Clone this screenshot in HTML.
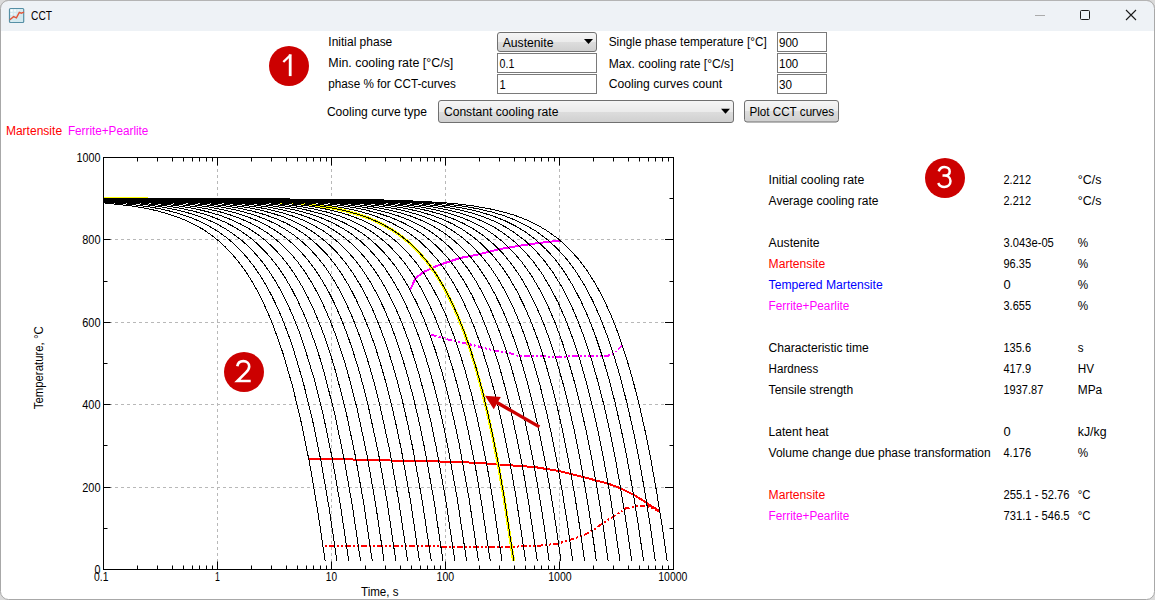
<!DOCTYPE html>
<html><head><meta charset="utf-8"><style>
html,body{margin:0;padding:0;width:1155px;height:600px;overflow:hidden;background:#dadada}
text{font-family:"Liberation Sans",sans-serif}
</style></head><body>
<svg width="1155" height="600" viewBox="0 0 1155 600" style="position:absolute;left:0;top:0">
<defs><linearGradient id="btn" x1="0" y1="0" x2="0" y2="1"><stop offset="0" stop-color="#f6f6f6"/><stop offset="0.5" stop-color="#ebebeb"/><stop offset="0.5" stop-color="#dddddd"/><stop offset="1" stop-color="#cfcfcf"/></linearGradient></defs>
<rect x="0" y="0" width="1155" height="600" fill="#dadada"/>
<rect x="0.5" y="0.5" width="1154" height="599" rx="8" ry="8" fill="#ffffff" stroke="#a8a8a8" stroke-width="1"/>
<path d="M1 31 V8.5 A7.5 7.5 0 0 1 8.5 1 H1146.5 A7.5 7.5 0 0 1 1154 8.5 V31 Z" fill="#eef2f6"/>
<path d="M0.5 8.5 A8 8 0 0 1 8.5 0.5 H1146.5 A8 8 0 0 1 1154.5 8.5" fill="none" stroke="#b4b4b4"/>
<g>
<rect x="9.5" y="8.5" width="14.2" height="14" rx="1" fill="#d3e9ef" stroke="#558fa5" stroke-width="1.2"/>
<rect x="10.4" y="9.4" width="2.3" height="2.3" fill="#ffffff" opacity="1.00"/>
<rect x="10.4" y="12.9" width="2.3" height="2.3" fill="#ffffff" opacity="0.72"/>
<rect x="10.4" y="16.4" width="2.3" height="2.3" fill="#ffffff" opacity="0.44"/>
<rect x="10.4" y="19.9" width="2.3" height="2.3" fill="#ffffff" opacity="0.16"/>
<rect x="13.9" y="9.4" width="2.3" height="2.3" fill="#ffffff" opacity="0.72"/>
<rect x="13.9" y="12.9" width="2.3" height="2.3" fill="#ffffff" opacity="0.44"/>
<rect x="13.9" y="16.4" width="2.3" height="2.3" fill="#ffffff" opacity="0.16"/>
<rect x="13.9" y="19.9" width="2.3" height="2.3" fill="#ffffff" opacity="0.00"/>
<rect x="17.4" y="9.4" width="2.3" height="2.3" fill="#ffffff" opacity="0.44"/>
<rect x="17.4" y="12.9" width="2.3" height="2.3" fill="#ffffff" opacity="0.16"/>
<rect x="17.4" y="16.4" width="2.3" height="2.3" fill="#ffffff" opacity="0.00"/>
<rect x="17.4" y="19.9" width="2.3" height="2.3" fill="#ffffff" opacity="0.00"/>
<rect x="20.9" y="9.4" width="2.3" height="2.3" fill="#ffffff" opacity="0.16"/>
<rect x="20.9" y="12.9" width="2.3" height="2.3" fill="#ffffff" opacity="0.00"/>
<rect x="20.9" y="16.4" width="2.3" height="2.3" fill="#ffffff" opacity="0.00"/>
<rect x="20.9" y="19.9" width="2.3" height="2.3" fill="#ffffff" opacity="0.00"/>
<polyline points="9.8,19.8 13.6,16.6 16.4,17.8 19.3,12.4 21.3,13.2 24,12.2" fill="none" stroke="#e0573a" stroke-width="1.4"/>
</g>
<text x="31" y="20" font-family="Liberation Sans" font-size="12px" fill="#000" textLength="21" lengthAdjust="spacingAndGlyphs">CCT</text>
<line x1="1035" y1="15.5" x2="1045" y2="15.5" stroke="#ababab" stroke-width="1"/>
<rect x="1080.5" y="10.5" width="9" height="9" rx="1" fill="none" stroke="#1a1a1a" stroke-width="1"/>
<path d="M1126 10 L1136 20 M1136 10 L1126 20" stroke="#1a1a1a" stroke-width="1.1"/>
<text x="328.3" y="46" font-family="Liberation Sans" font-size="12px" fill="#000" textLength="64" lengthAdjust="spacingAndGlyphs" >Initial phase</text>
<text x="328.3" y="67.3" font-family="Liberation Sans" font-size="12px" fill="#000" textLength="125" lengthAdjust="spacingAndGlyphs" >Min. cooling rate [°C/s]</text>
<text x="328.3" y="88.2" font-family="Liberation Sans" font-size="12px" fill="#000" textLength="127.5" lengthAdjust="spacingAndGlyphs" >phase % for CCT-curves</text>
<text x="608.6999999999999" y="46.3" font-family="Liberation Sans" font-size="12px" fill="#000" textLength="158" lengthAdjust="spacingAndGlyphs" >Single phase temperature [°C]</text>
<text x="608.6999999999999" y="67.5" font-family="Liberation Sans" font-size="12px" fill="#000" textLength="124.8" lengthAdjust="spacingAndGlyphs" >Max. cooling rate [°C/s]</text>
<text x="608.6999999999999" y="88.3" font-family="Liberation Sans" font-size="12px" fill="#000" textLength="113.4" lengthAdjust="spacingAndGlyphs" >Cooling curves count</text>
<text x="326.90000000000003" y="115.6" font-family="Liberation Sans" font-size="12px" fill="#000" textLength="100" lengthAdjust="spacingAndGlyphs" >Cooling curve type</text>
<rect x="497.5" y="32.5" width="99" height="19" rx="2.5" fill="url(#btn)" stroke="#707070"/>
<text x="502.7" y="46.7" font-family="Liberation Sans" font-size="12px" fill="#000" textLength="50.8" lengthAdjust="spacingAndGlyphs" >Austenite</text>
<path d="M584 39 h9 l-4.5 5 z" fill="#000"/>
<rect x="497.5" y="53.5" width="99" height="19" fill="#fff" stroke="#7a7a7a"/>
<text x="499.6" y="67.6" font-family="Liberation Sans" font-size="12px" fill="#000" textLength="14.8" lengthAdjust="spacingAndGlyphs" >0.1</text>
<rect x="497.5" y="74.5" width="99" height="19" fill="#fff" stroke="#7a7a7a"/>
<text x="499.6" y="88.5" font-family="Liberation Sans" font-size="12px" fill="#000" textLength="6.2" lengthAdjust="spacingAndGlyphs" >1</text>
<rect x="777.5" y="32.5" width="49" height="19" fill="#fff" stroke="#7a7a7a"/>
<text x="779.0" y="46.5" font-family="Liberation Sans" font-size="12px" fill="#000" textLength="19.3" lengthAdjust="spacingAndGlyphs" >900</text>
<rect x="777.5" y="53.5" width="49" height="19" fill="#fff" stroke="#7a7a7a"/>
<text x="779.0" y="67.5" font-family="Liberation Sans" font-size="12px" fill="#000" textLength="19.3" lengthAdjust="spacingAndGlyphs" >100</text>
<rect x="777.5" y="74.5" width="49" height="19" fill="#fff" stroke="#7a7a7a"/>
<text x="779.0" y="88.5" font-family="Liberation Sans" font-size="12px" fill="#000" textLength="13" lengthAdjust="spacingAndGlyphs" >30</text>
<rect x="438.5" y="100.5" width="295" height="22" rx="2.5" fill="url(#btn)" stroke="#707070"/>
<text x="443.90000000000003" y="115.7" font-family="Liberation Sans" font-size="12px" fill="#000" textLength="114.5" lengthAdjust="spacingAndGlyphs" >Constant cooling rate</text>
<path d="M721 108.8 h9 l-4.5 5 z" fill="#000"/>
<rect x="744.5" y="100.5" width="94" height="21.5" rx="2.5" fill="url(#btn)" stroke="#707070"/>
<text x="749.4" y="115.6" font-family="Liberation Sans" font-size="12px" fill="#000" textLength="84.8" lengthAdjust="spacingAndGlyphs" >Plot CCT curves</text>
<text x="5.8999999999999995" y="134.8" font-family="Liberation Sans" font-size="12px" fill="#ff0000" textLength="56.2" lengthAdjust="spacingAndGlyphs" >Martensite</text>
<text x="67.89999999999999" y="134.8" font-family="Liberation Sans" font-size="12px" fill="#ff00ff" textLength="80.5" lengthAdjust="spacingAndGlyphs" >Ferrite+Pearlite</text>
<line x1="217.5" y1="157" x2="217.5" y2="569.5" stroke="#b8b8b8" stroke-width="1" stroke-dasharray="3 3"/>
<line x1="331.5" y1="157" x2="331.5" y2="569.5" stroke="#b8b8b8" stroke-width="1" stroke-dasharray="3 3"/>
<line x1="445.5" y1="157" x2="445.5" y2="569.5" stroke="#b8b8b8" stroke-width="1" stroke-dasharray="3 3"/>
<line x1="559.5" y1="157" x2="559.5" y2="569.5" stroke="#b8b8b8" stroke-width="1" stroke-dasharray="3 3"/>
<line x1="103" y1="487.5" x2="673.5" y2="487.5" stroke="#b8b8b8" stroke-width="1" stroke-dasharray="3 3"/>
<line x1="103" y1="404.5" x2="673.5" y2="404.5" stroke="#b8b8b8" stroke-width="1" stroke-dasharray="3 3"/>
<line x1="103" y1="322.5" x2="673.5" y2="322.5" stroke="#b8b8b8" stroke-width="1" stroke-dasharray="3 3"/>
<line x1="103" y1="239.5" x2="673.5" y2="239.5" stroke="#b8b8b8" stroke-width="1" stroke-dasharray="3 3"/>
<path d="M410.1 290.0 L415.6 278.3 L423.4 272.1 L439.0 265.0 L460.0 258.0 L479.5 254.2 L499.7 249.0 L520.0 245.6 L540.3 242.8 L559.7 240.6" fill="none" stroke="#ff00ff" stroke-width="2" stroke-linejoin="round" shape-rendering="crispEdges"/>
<path d="M431.2 334.6 L448.6 339.6 L467.6 343.8 L494.3 350.5 L507.6 352.4 L519.0 356.2 L553.3 356.6 L606.7 356.2 L614.3 353.3 L622.3 345.1" fill="none" stroke="#ff00ff" stroke-width="2" stroke-dasharray="5.5 2.3 2 2 2 2.2" stroke-dashoffset="0" stroke-linejoin="round" shape-rendering="crispEdges"/>
<path d="M308.6 459.0 L345.0 459.3 L390.0 460.5 L440.0 461.5 L480.0 462.9 L498.1 464.5 L534.3 467.0 L559.0 471.0 L583.6 477.1 L608.3 483.7 L621.5 488.7 L634.6 495.2 L646.5 502.8 L660.1 511.7" fill="none" stroke="#ff0000" stroke-width="2" stroke-linejoin="round" shape-rendering="crispEdges"/>
<path d="M325.2 545.7 L415.3 546.3 L504.0 547.1 L540.0 545.6 L558.0 543.6 L570.4 539.8 L585.0 534.6 L591.8 530.8 L601.9 524.0 L613.2 516.6 L625.5 508.5 L635.7 506.3 L646.9 505.7 L659.3 511.3" fill="none" stroke="#ff0000" stroke-width="2" stroke-dasharray="5.5 2.3 2 2 2 2.2" stroke-dashoffset="11.8" stroke-linejoin="round" shape-rendering="crispEdges"/>
<path d="M103.2 198.8 L190.2 199.2 L245.2 200.3 L286.2 202.4 L303.2 203.9 L318.5 205.8 L333.3 208.2 L346.7 211.2 L359.0 214.7 L370.2 218.7 L380.9 223.6 L390.7 229.0 L400.0 235.3 L408.8 242.4 L417.8 251.1 L426.6 261.3 L434.8 272.5 L442.4 284.9 L449.8 298.8 L456.9 314.2 L463.8 331.3 L470.1 349.3 L476.1 368.8 L482.1 390.7 L487.8 414.4 L493.3 439.6 L498.5 466.2 L503.7 495.9 L513.6 561.3" fill="none" stroke="#ffff00" stroke-width="3" shape-rendering="crispEdges"/>
<path d="M103.5 198.7 L343.6 199.2 L398.5 200.3 L438.3 202.3 L457.1 203.9 L473.6 206.0 L488.7 208.6 L502.2 211.7 L514.6 215.3 L526.3 219.8 L536.8 224.7 L546.9 230.7 L558.2 238.8 L568.3 248.0 L578.1 258.7 L587.1 270.7 L595.8 284.4 L603.7 299.2 L611.6 316.6 L618.7 334.9 L625.8 356.0 L632.6 379.1 L639.0 403.9 L645.0 430.4 L651.0 460.3 L656.6 491.8 L661.9 524.7 L667.2 561.3 M103.5 198.7 L258.8 198.8 L335.7 199.3 L389.4 200.4 L428.7 202.4 L447.1 204.1 L463.3 206.2 L478.0 208.8 L491.7 212.0 L504.2 215.8 L515.6 220.2 L526.2 225.4 L536.2 231.3 L547.2 239.5 L557.5 248.9 L567.1 259.6 L575.9 271.5 L584.4 285.1 L592.5 300.4 L599.8 316.7 L607.2 335.7 L614.2 356.4 L620.8 379.0 L627.0 403.3 L633.3 430.8 L639.2 460.1 L644.7 491.0 L650.2 525.4 L655.4 561.3 M103.5 198.7 L251.8 198.8 L327.1 199.3 L380.0 200.5 L418.9 202.6 L436.9 204.3 L453.1 206.4 L467.9 209.1 L481.2 212.3 L493.4 216.2 L504.6 220.6 L515.0 225.7 L525.1 231.8 L535.9 239.9 L546.0 249.2 L555.4 259.7 L564.4 271.9 L573.0 285.9 L580.9 301.0 L588.5 317.9 L595.7 336.5 L602.5 356.9 L609.4 380.4 L615.5 404.3 L621.6 431.4 L627.4 460.1 L633.1 492.3 L638.5 526.2 L643.6 561.3 M103.5 198.7 L245.8 198.8 L319.4 199.4 L371.2 200.6 L409.6 202.8 L427.5 204.6 L443.4 206.8 L457.8 209.5 L470.8 212.7 L483.2 216.7 L494.4 221.3 L504.6 226.5 L514.5 232.6 L525.4 241.0 L535.3 250.3 L544.4 260.8 L553.3 272.9 L561.7 286.7 L569.5 301.6 L577.2 319.1 L584.2 337.5 L590.9 357.6 L597.6 380.5 L604.0 405.4 L610.0 432.0 L615.6 460.1 L621.2 491.6 L626.5 524.6 L631.8 561.3 M103.5 198.7 L239.5 198.9 L311.5 199.4 L362.4 200.7 L400.3 203.0 L417.9 204.8 L433.7 207.1 L447.8 209.9 L460.9 213.3 L473.0 217.3 L484.0 221.9 L494.3 227.3 L504.0 233.5 L514.6 241.9 L524.3 251.1 L533.6 262.0 L542.2 274.0 L550.4 287.7 L558.4 303.1 L565.9 320.4 L572.8 338.5 L579.7 359.4 L586.3 382.1 L592.5 406.5 L598.3 432.6 L604.2 462.0 L609.7 493.0 L614.8 525.3 L620.0 561.3 M103.5 198.7 L233.7 198.9 L303.7 199.5 L353.5 200.8 L390.8 203.2 L408.0 205.1 L423.5 207.4 L437.6 210.3 L450.4 213.7 L462.2 217.7 L473.3 222.5 L483.4 227.8 L493.1 234.2 L503.6 242.5 L513.3 252.0 L522.4 262.8 L531.2 275.2 L539.2 288.7 L547.0 303.9 L554.4 320.9 L561.4 339.7 L568.2 360.2 L574.6 382.5 L580.6 406.4 L586.7 433.4 L592.4 462.1 L597.8 492.4 L603.2 526.1 L608.2 561.3 M103.5 198.7 L227.7 198.9 L296.1 199.5 L345.0 201.0 L381.8 203.5 L398.9 205.4 L414.0 207.8 L427.8 210.7 L440.7 214.3 L452.5 218.5 L463.3 223.4 L473.2 228.8 L482.7 235.2 L493.2 243.8 L502.8 253.4 L511.6 264.1 L520.2 276.4 L528.4 290.5 L535.9 305.6 L543.2 322.4 L550.1 340.9 L556.7 361.1 L563.2 384.2 L569.1 407.7 L575.1 434.2 L580.6 462.3 L586.2 493.8 L591.5 526.9 L596.4 561.3 M103.5 198.7 L222.2 198.9 L288.6 199.6 L336.4 201.1 L372.6 203.7 L389.3 205.7 L404.4 208.2 L417.8 211.2 L430.3 214.8 L441.9 219.0 L452.8 224.0 L462.7 229.6 L472.0 236.0 L482.3 244.6 L491.6 254.1 L500.6 265.1 L508.9 277.3 L516.9 291.1 L524.3 306.0 L531.7 323.2 L538.4 341.3 L545.2 362.1 L551.6 384.7 L557.7 409.1 L563.5 435.1 L568.9 462.6 L574.4 493.4 L579.5 525.6 L584.6 561.3 M103.5 198.7 L216.5 199.0 L281.2 199.7 L327.8 201.3 L363.5 204.0 L380.1 206.1 L394.8 208.6 L408.2 211.8 L420.5 215.4 L431.7 219.7 L442.4 224.7 L452.1 230.3 L461.4 236.9 L471.5 245.5 L480.8 255.3 L489.6 266.2 L497.7 278.3 L505.6 291.9 L513.1 307.1 L520.3 324.1 L527.1 342.8 L533.7 363.3 L540.0 385.4 L545.9 409.2 L551.9 436.1 L557.5 464.7 L562.8 494.9 L567.8 526.4 L572.8 561.3 M103.5 198.7 L210.9 199.0 L273.7 199.8 L319.5 201.5 L354.5 204.3 L370.7 206.5 L385.0 209.1 L398.2 212.2 L410.4 216.0 L421.6 220.4 L432.0 225.5 L441.8 231.3 L450.9 237.9 L461.0 246.8 L470.1 256.5 L478.7 267.4 L486.9 279.8 L494.8 293.9 L502.2 309.1 L509.2 325.9 L515.9 344.4 L522.3 364.5 L528.7 387.4 L534.5 410.8 L540.3 437.2 L545.8 465.1 L551.0 494.6 L556.2 527.2 L561.0 561.3 M103.5 198.7 L205.4 199.0 L266.3 199.9 L310.9 201.6 L329.0 202.9 L345.4 204.6 L361.1 206.8 L375.4 209.5 L388.5 212.8 L400.4 216.6 L411.4 221.1 L421.8 226.3 L431.3 232.2 L440.5 239.0 L450.0 247.5 L459.2 257.5 L467.8 268.7 L475.8 281.0 L483.6 294.9 L490.7 309.8 L497.8 327.1 L504.4 345.2 L510.6 364.9 L516.8 387.2 L522.8 411.2 L528.4 436.9 L533.8 464.1 L539.1 494.3 L544.2 526.1 L549.2 561.3 M103.5 198.8 L200.1 199.1 L259.1 200.0 L302.8 201.9 L320.5 203.2 L336.4 204.9 L351.7 207.2 L365.6 210.0 L378.3 213.3 L390.2 217.2 L401.2 221.8 L411.3 227.1 L420.9 233.1 L429.8 239.9 L439.1 248.4 L448.1 258.3 L456.4 269.3 L464.5 281.9 L472.1 295.5 L479.3 310.7 L486.2 327.6 L492.9 346.1 L499.3 366.3 L505.3 388.2 L511.1 411.7 L516.9 438.1 L522.4 466.3 L527.6 495.9 L537.4 561.3 M103.5 198.8 L195.2 199.2 L252.4 200.2 L294.9 202.1 L312.3 203.6 L327.8 205.4 L342.7 207.7 L356.5 210.6 L368.9 214.0 L380.4 218.0 L391.1 222.7 L401.3 228.1 L410.5 234.2 L419.6 241.2 L428.8 250.0 L437.8 260.2 L446.0 271.3 L453.9 283.8 L461.5 297.9 L468.5 313.0 L475.3 329.8 L481.7 348.1 L487.9 368.0 L494.1 390.5 L499.8 413.6 L505.4 439.5 L510.7 466.9 L515.8 495.8 L525.7 561.3 M103.5 198.8 L190.5 199.2 L245.5 200.3 L286.5 202.4 L303.5 203.9 L318.8 205.8 L333.6 208.2 L347.0 211.2 L359.3 214.7 L370.5 218.7 L381.2 223.6 L391.0 229.0 L400.3 235.3 L409.1 242.4 L418.1 251.1 L426.9 261.3 L435.1 272.5 L442.7 284.9 L450.1 298.8 L457.2 314.2 L464.1 331.3 L470.4 349.3 L476.4 368.8 L482.4 390.7 L488.1 414.4 L493.6 439.6 L498.8 466.2 L504.0 495.9 L513.9 561.3 M103.5 198.8 L185.6 199.3 L238.7 200.5 L278.6 202.7 L295.3 204.3 L310.2 206.2 L324.6 208.8 L337.9 211.9 L349.8 215.4 L361.0 219.7 L371.3 224.6 L380.9 230.1 L390.2 236.6 L398.7 243.6 L407.7 252.6 L416.2 262.8 L424.2 273.9 L431.9 286.6 L439.1 300.3 L446.0 315.5 L452.6 332.3 L459.0 350.7 L465.1 370.6 L471.0 392.2 L476.6 415.3 L482.1 441.1 L487.5 468.6 L492.5 497.6 L502.1 561.3 M103.5 198.8 L180.9 199.4 L231.9 200.7 L270.8 203.0 L287.1 204.7 L301.5 206.7 L315.7 209.4 L328.6 212.5 L340.5 216.3 L351.3 220.6 L361.3 225.5 L370.9 231.2 L379.9 237.7 L388.4 245.0 L397.2 254.0 L405.4 264.0 L413.4 275.5 L420.9 288.0 L428.1 302.0 L434.8 317.0 L441.5 334.2 L447.7 352.2 L453.7 371.8 L459.6 393.8 L465.0 416.3 L470.4 441.5 L475.6 468.1 L480.7 497.7 L490.3 561.3 M103.5 198.9 L176.5 199.5 L225.7 200.9 L263.2 203.4 L279.0 205.1 L293.2 207.3 L307.0 210.1 L319.5 213.3 L331.0 217.1 L341.7 221.6 L351.7 226.7 L361.0 232.5 L370.0 239.2 L378.2 246.6 L386.7 255.5 L395.0 265.8 L402.7 277.2 L410.2 290.1 L417.2 303.9 L424.0 319.3 L430.5 336.2 L436.5 353.9 L442.5 373.9 L448.2 395.5 L453.7 418.6 L459.0 443.2 L469.0 498.0 L478.5 561.3 M103.5 198.9 L172.0 199.6 L219.0 201.1 L255.3 203.8 L270.6 205.6 L284.6 207.9 L297.9 210.7 L310.3 214.1 L321.7 218.1 L332.1 222.6 L341.8 227.8 L351.0 233.7 L359.7 240.4 L367.9 248.0 L376.4 257.2 L384.4 267.4 L392.1 279.1 L399.4 291.8 L406.4 306.0 L412.9 321.1 L419.2 337.7 L425.3 355.8 L431.1 375.4 L436.7 396.4 L442.0 418.9 L447.3 443.9 L457.2 498.3 L466.7 561.3 M103.5 199.0 L168.2 199.8 L213.1 201.4 L248.3 204.3 L263.0 206.2 L276.6 208.6 L289.5 211.5 L301.5 215.0 L312.5 219.1 L322.8 223.8 L332.4 229.2 L341.3 235.2 L349.7 242.0 L357.9 249.8 L366.1 259.0 L374.1 269.6 L381.6 281.1 L388.6 293.7 L395.4 307.7 L402.0 323.1 L408.3 340.1 L414.1 357.9 L419.8 377.0 L425.4 398.4 L430.8 421.4 L435.9 445.8 L445.8 500.2 L454.9 561.3 M103.5 199.1 L163.9 200.0 L207.0 201.8 L224.9 203.1 L240.7 204.8 L255.2 206.8 L268.3 209.3 L280.8 212.4 L292.3 215.9 L303.2 220.2 L313.1 225.0 L322.7 230.5 L331.5 236.7 L339.9 243.8 L347.8 251.6 L355.9 261.0 L363.6 271.5 L370.9 283.0 L377.9 295.8 L384.5 309.6 L390.8 324.8 L396.9 341.3 L402.8 359.3 L408.5 378.8 L413.9 399.7 L419.1 422.0 L424.3 446.8 L434.0 500.7 L443.1 561.3 M103.5 199.2 L159.9 200.2 L201.0 202.2 L218.2 203.6 L233.5 205.4 L247.5 207.6 L260.2 210.1 L272.4 213.3 L283.6 217.0 L294.1 221.4 L303.9 226.4 L313.1 232.0 L321.6 238.2 L329.7 245.3 L337.6 253.3 L345.4 262.7 L353.1 273.4 L360.3 285.1 L367.1 297.7 L373.6 311.8 L379.7 326.6 L385.9 343.5 L391.5 361.1 L397.0 380.0 L402.5 401.2 L407.7 423.8 L412.7 447.8 L422.3 501.2 L431.3 561.3 M103.5 199.3 L156.4 200.5 L195.4 202.6 L211.8 204.2 L226.5 206.1 L240.0 208.4 L252.4 211.1 L264.2 214.5 L275.2 218.4 L285.3 222.8 L294.8 227.9 L303.6 233.6 L312.1 240.1 L320.1 247.4 L327.7 255.4 L335.5 265.1 L342.8 275.7 L349.8 287.3 L356.5 300.3 L362.8 314.1 L369.0 329.3 L374.9 345.8 L380.5 363.7 L386.0 383.0 L391.3 403.7 L396.3 425.7 L401.4 450.1 L410.7 501.9 L419.5 561.3 M103.5 199.5 L152.8 200.8 L189.7 203.1 L205.3 204.8 L219.5 206.8 L232.5 209.2 L244.5 212.1 L255.8 215.6 L266.4 219.6 L276.3 224.2 L285.4 229.4 L294.1 235.3 L302.5 242.0 L310.2 249.2 L317.7 257.5 L325.2 267.1 L332.3 277.7 L339.2 289.5 L345.7 302.2 L351.9 316.2 L358.0 331.6 L363.9 348.4 L369.4 365.9 L374.7 384.6 L379.9 405.5 L389.9 451.5 L399.0 502.7 L407.7 561.3 M103.5 199.7 L149.3 201.2 L184.4 203.8 L199.2 205.5 L212.9 207.7 L225.3 210.3 L236.8 213.3 L247.8 216.9 L257.9 221.0 L267.5 225.8 L276.4 231.1 L285.0 237.3 L293.0 244.0 L300.6 251.6 L307.8 259.9 L315.0 269.4 L322.0 280.2 L328.7 291.9 L335.1 304.8 L341.3 319.1 L347.2 334.2 L352.8 350.6 L358.3 368.3 L363.6 387.3 L368.6 407.6 L378.4 453.1 L387.4 503.6 L395.9 561.3 M103.5 200.0 L146.0 201.7 L179.1 204.5 L193.3 206.4 L206.4 208.7 L218.4 211.4 L229.4 214.6 L239.9 218.4 L249.8 222.7 L259.0 227.6 L267.6 233.1 L275.8 239.4 L283.7 246.4 L291.0 253.9 L298.1 262.4 L305.2 272.3 L311.9 283.0 L318.5 294.9 L324.6 307.7 L330.6 321.7 L336.4 337.0 L342.0 353.6 L347.3 370.9 L357.4 409.9 L366.9 454.8 L375.7 504.6 L384.1 561.3 M103.5 200.3 L142.8 202.2 L173.9 205.3 L187.4 207.3 L199.7 209.8 L211.2 212.7 L221.8 216.0 L231.8 219.9 L241.3 224.4 L250.3 229.5 L258.7 235.2 L266.8 241.7 L274.3 248.7 L281.5 256.5 L288.3 265.1 L295.1 274.9 L301.7 285.8 L308.0 297.5 L314.1 310.5 L320.0 324.7 L325.6 339.6 L330.9 355.8 L336.1 373.2 L346.0 411.6 L355.3 455.8 L364.1 505.6 L372.3 561.3 M103.5 200.7 L139.8 202.9 L169.1 206.3 L181.8 208.5 L193.6 211.2 L204.6 214.2 L214.7 217.8 L224.5 221.9 L233.6 226.6 L242.1 231.9 L250.2 237.7 L257.9 244.3 L265.3 251.6 L272.1 259.5 L278.8 268.3 L285.5 278.3 L291.8 289.2 L298.0 301.2 L303.8 314.0 L309.5 327.9 L315.0 343.1 L320.3 359.4 L325.2 376.4 L334.8 414.4 L343.9 457.9 L352.5 506.8 L360.6 561.3 M103.5 201.3 L137.0 203.7 L151.2 205.4 L164.3 207.4 L176.4 209.9 L187.5 212.7 L197.8 215.9 L207.5 219.6 L216.8 223.9 L225.5 228.8 L233.6 234.2 L241.5 240.2 L248.9 246.9 L255.9 254.3 L262.6 262.3 L269.1 271.3 L275.5 281.3 L281.7 292.3 L287.6 304.1 L293.3 317.0 L298.9 331.1 L304.1 345.9 L314.1 378.7 L323.6 416.7 L332.4 459.3 L340.7 507.1 L348.8 561.3 M103.5 201.9 L134.3 204.8 L147.7 206.6 L159.8 208.8 L171.2 211.4 L181.8 214.5 L191.6 217.9 L200.8 221.9 L209.6 226.4 L217.9 231.4 L225.7 237.0 L233.2 243.2 L240.3 250.2 L247.0 257.6 L253.5 265.9 L259.8 274.9 L266.0 285.2 L271.9 296.1 L277.7 308.1 L283.1 320.9 L288.4 334.7 L293.5 349.5 L303.3 382.6 L312.5 420.0 L321.1 461.8 L329.2 508.5 L337.0 561.3 M103.5 202.8 L131.7 206.0 L144.0 208.0 L155.4 210.4 L166.0 213.3 L175.9 216.5 L185.2 220.2 L193.9 224.3 L202.4 229.0 L210.2 234.3 L217.7 240.1 L224.8 246.5 L231.6 253.5 L238.1 261.2 L244.3 269.5 L250.4 278.8 L256.3 288.9 L262.1 300.1 L267.5 311.9 L272.9 324.7 L282.9 353.1 L292.4 385.6 L301.2 422.3 L309.7 463.7 L317.6 510.1 L325.2 561.3" fill="none" stroke="#000" stroke-width="1" shape-rendering="crispEdges"/>
<rect x="103.5" y="157.5" width="570.0" height="412.0" fill="none" stroke="#000" stroke-width="1"/>
<line x1="103.5" y1="569.5" x2="103.5" y2="561.5" stroke="#000" stroke-width="1"/>
<line x1="103.5" y1="157.5" x2="103.5" y2="165.5" stroke="#000" stroke-width="1"/>
<line x1="137.5" y1="569.5" x2="137.5" y2="565.5" stroke="#000" stroke-width="1"/>
<line x1="137.5" y1="157.5" x2="137.5" y2="161.5" stroke="#000" stroke-width="1"/>
<line x1="157.5" y1="569.5" x2="157.5" y2="565.5" stroke="#000" stroke-width="1"/>
<line x1="157.5" y1="157.5" x2="157.5" y2="161.5" stroke="#000" stroke-width="1"/>
<line x1="172.5" y1="569.5" x2="172.5" y2="565.5" stroke="#000" stroke-width="1"/>
<line x1="172.5" y1="157.5" x2="172.5" y2="161.5" stroke="#000" stroke-width="1"/>
<line x1="183.5" y1="569.5" x2="183.5" y2="565.5" stroke="#000" stroke-width="1"/>
<line x1="183.5" y1="157.5" x2="183.5" y2="161.5" stroke="#000" stroke-width="1"/>
<line x1="192.5" y1="569.5" x2="192.5" y2="565.5" stroke="#000" stroke-width="1"/>
<line x1="192.5" y1="157.5" x2="192.5" y2="161.5" stroke="#000" stroke-width="1"/>
<line x1="199.5" y1="569.5" x2="199.5" y2="565.5" stroke="#000" stroke-width="1"/>
<line x1="199.5" y1="157.5" x2="199.5" y2="161.5" stroke="#000" stroke-width="1"/>
<line x1="206.5" y1="569.5" x2="206.5" y2="565.5" stroke="#000" stroke-width="1"/>
<line x1="206.5" y1="157.5" x2="206.5" y2="161.5" stroke="#000" stroke-width="1"/>
<line x1="212.5" y1="569.5" x2="212.5" y2="565.5" stroke="#000" stroke-width="1"/>
<line x1="212.5" y1="157.5" x2="212.5" y2="161.5" stroke="#000" stroke-width="1"/>
<line x1="217.5" y1="569.5" x2="217.5" y2="561.5" stroke="#000" stroke-width="1"/>
<line x1="217.5" y1="157.5" x2="217.5" y2="165.5" stroke="#000" stroke-width="1"/>
<line x1="251.5" y1="569.5" x2="251.5" y2="565.5" stroke="#000" stroke-width="1"/>
<line x1="251.5" y1="157.5" x2="251.5" y2="161.5" stroke="#000" stroke-width="1"/>
<line x1="271.5" y1="569.5" x2="271.5" y2="565.5" stroke="#000" stroke-width="1"/>
<line x1="271.5" y1="157.5" x2="271.5" y2="161.5" stroke="#000" stroke-width="1"/>
<line x1="286.5" y1="569.5" x2="286.5" y2="565.5" stroke="#000" stroke-width="1"/>
<line x1="286.5" y1="157.5" x2="286.5" y2="161.5" stroke="#000" stroke-width="1"/>
<line x1="297.5" y1="569.5" x2="297.5" y2="565.5" stroke="#000" stroke-width="1"/>
<line x1="297.5" y1="157.5" x2="297.5" y2="161.5" stroke="#000" stroke-width="1"/>
<line x1="306.5" y1="569.5" x2="306.5" y2="565.5" stroke="#000" stroke-width="1"/>
<line x1="306.5" y1="157.5" x2="306.5" y2="161.5" stroke="#000" stroke-width="1"/>
<line x1="313.5" y1="569.5" x2="313.5" y2="565.5" stroke="#000" stroke-width="1"/>
<line x1="313.5" y1="157.5" x2="313.5" y2="161.5" stroke="#000" stroke-width="1"/>
<line x1="320.5" y1="569.5" x2="320.5" y2="565.5" stroke="#000" stroke-width="1"/>
<line x1="320.5" y1="157.5" x2="320.5" y2="161.5" stroke="#000" stroke-width="1"/>
<line x1="326.5" y1="569.5" x2="326.5" y2="565.5" stroke="#000" stroke-width="1"/>
<line x1="326.5" y1="157.5" x2="326.5" y2="161.5" stroke="#000" stroke-width="1"/>
<line x1="331.5" y1="569.5" x2="331.5" y2="561.5" stroke="#000" stroke-width="1"/>
<line x1="331.5" y1="157.5" x2="331.5" y2="165.5" stroke="#000" stroke-width="1"/>
<line x1="365.5" y1="569.5" x2="365.5" y2="565.5" stroke="#000" stroke-width="1"/>
<line x1="365.5" y1="157.5" x2="365.5" y2="161.5" stroke="#000" stroke-width="1"/>
<line x1="385.5" y1="569.5" x2="385.5" y2="565.5" stroke="#000" stroke-width="1"/>
<line x1="385.5" y1="157.5" x2="385.5" y2="161.5" stroke="#000" stroke-width="1"/>
<line x1="400.5" y1="569.5" x2="400.5" y2="565.5" stroke="#000" stroke-width="1"/>
<line x1="400.5" y1="157.5" x2="400.5" y2="161.5" stroke="#000" stroke-width="1"/>
<line x1="411.5" y1="569.5" x2="411.5" y2="565.5" stroke="#000" stroke-width="1"/>
<line x1="411.5" y1="157.5" x2="411.5" y2="161.5" stroke="#000" stroke-width="1"/>
<line x1="420.5" y1="569.5" x2="420.5" y2="565.5" stroke="#000" stroke-width="1"/>
<line x1="420.5" y1="157.5" x2="420.5" y2="161.5" stroke="#000" stroke-width="1"/>
<line x1="427.5" y1="569.5" x2="427.5" y2="565.5" stroke="#000" stroke-width="1"/>
<line x1="427.5" y1="157.5" x2="427.5" y2="161.5" stroke="#000" stroke-width="1"/>
<line x1="434.5" y1="569.5" x2="434.5" y2="565.5" stroke="#000" stroke-width="1"/>
<line x1="434.5" y1="157.5" x2="434.5" y2="161.5" stroke="#000" stroke-width="1"/>
<line x1="440.5" y1="569.5" x2="440.5" y2="565.5" stroke="#000" stroke-width="1"/>
<line x1="440.5" y1="157.5" x2="440.5" y2="161.5" stroke="#000" stroke-width="1"/>
<line x1="445.5" y1="569.5" x2="445.5" y2="561.5" stroke="#000" stroke-width="1"/>
<line x1="445.5" y1="157.5" x2="445.5" y2="165.5" stroke="#000" stroke-width="1"/>
<line x1="479.5" y1="569.5" x2="479.5" y2="565.5" stroke="#000" stroke-width="1"/>
<line x1="479.5" y1="157.5" x2="479.5" y2="161.5" stroke="#000" stroke-width="1"/>
<line x1="499.5" y1="569.5" x2="499.5" y2="565.5" stroke="#000" stroke-width="1"/>
<line x1="499.5" y1="157.5" x2="499.5" y2="161.5" stroke="#000" stroke-width="1"/>
<line x1="514.5" y1="569.5" x2="514.5" y2="565.5" stroke="#000" stroke-width="1"/>
<line x1="514.5" y1="157.5" x2="514.5" y2="161.5" stroke="#000" stroke-width="1"/>
<line x1="525.5" y1="569.5" x2="525.5" y2="565.5" stroke="#000" stroke-width="1"/>
<line x1="525.5" y1="157.5" x2="525.5" y2="161.5" stroke="#000" stroke-width="1"/>
<line x1="534.5" y1="569.5" x2="534.5" y2="565.5" stroke="#000" stroke-width="1"/>
<line x1="534.5" y1="157.5" x2="534.5" y2="161.5" stroke="#000" stroke-width="1"/>
<line x1="541.5" y1="569.5" x2="541.5" y2="565.5" stroke="#000" stroke-width="1"/>
<line x1="541.5" y1="157.5" x2="541.5" y2="161.5" stroke="#000" stroke-width="1"/>
<line x1="548.5" y1="569.5" x2="548.5" y2="565.5" stroke="#000" stroke-width="1"/>
<line x1="548.5" y1="157.5" x2="548.5" y2="161.5" stroke="#000" stroke-width="1"/>
<line x1="554.5" y1="569.5" x2="554.5" y2="565.5" stroke="#000" stroke-width="1"/>
<line x1="554.5" y1="157.5" x2="554.5" y2="161.5" stroke="#000" stroke-width="1"/>
<line x1="559.5" y1="569.5" x2="559.5" y2="561.5" stroke="#000" stroke-width="1"/>
<line x1="559.5" y1="157.5" x2="559.5" y2="165.5" stroke="#000" stroke-width="1"/>
<line x1="593.5" y1="569.5" x2="593.5" y2="565.5" stroke="#000" stroke-width="1"/>
<line x1="593.5" y1="157.5" x2="593.5" y2="161.5" stroke="#000" stroke-width="1"/>
<line x1="613.5" y1="569.5" x2="613.5" y2="565.5" stroke="#000" stroke-width="1"/>
<line x1="613.5" y1="157.5" x2="613.5" y2="161.5" stroke="#000" stroke-width="1"/>
<line x1="628.5" y1="569.5" x2="628.5" y2="565.5" stroke="#000" stroke-width="1"/>
<line x1="628.5" y1="157.5" x2="628.5" y2="161.5" stroke="#000" stroke-width="1"/>
<line x1="639.5" y1="569.5" x2="639.5" y2="565.5" stroke="#000" stroke-width="1"/>
<line x1="639.5" y1="157.5" x2="639.5" y2="161.5" stroke="#000" stroke-width="1"/>
<line x1="648.5" y1="569.5" x2="648.5" y2="565.5" stroke="#000" stroke-width="1"/>
<line x1="648.5" y1="157.5" x2="648.5" y2="161.5" stroke="#000" stroke-width="1"/>
<line x1="655.5" y1="569.5" x2="655.5" y2="565.5" stroke="#000" stroke-width="1"/>
<line x1="655.5" y1="157.5" x2="655.5" y2="161.5" stroke="#000" stroke-width="1"/>
<line x1="662.5" y1="569.5" x2="662.5" y2="565.5" stroke="#000" stroke-width="1"/>
<line x1="662.5" y1="157.5" x2="662.5" y2="161.5" stroke="#000" stroke-width="1"/>
<line x1="668.5" y1="569.5" x2="668.5" y2="565.5" stroke="#000" stroke-width="1"/>
<line x1="668.5" y1="157.5" x2="668.5" y2="161.5" stroke="#000" stroke-width="1"/>
<line x1="103.5" y1="569.5" x2="110.5" y2="569.5" stroke="#000" stroke-width="1"/>
<line x1="673.5" y1="569.5" x2="665.0" y2="569.5" stroke="#000" stroke-width="1"/>
<line x1="103.5" y1="528.5" x2="107.5" y2="528.5" stroke="#000" stroke-width="1"/>
<line x1="673.5" y1="528.5" x2="669.5" y2="528.5" stroke="#000" stroke-width="1"/>
<line x1="103.5" y1="487.5" x2="110.5" y2="487.5" stroke="#000" stroke-width="1"/>
<line x1="673.5" y1="487.5" x2="665.0" y2="487.5" stroke="#000" stroke-width="1"/>
<line x1="103.5" y1="445.5" x2="107.5" y2="445.5" stroke="#000" stroke-width="1"/>
<line x1="673.5" y1="445.5" x2="669.5" y2="445.5" stroke="#000" stroke-width="1"/>
<line x1="103.5" y1="404.5" x2="110.5" y2="404.5" stroke="#000" stroke-width="1"/>
<line x1="673.5" y1="404.5" x2="665.0" y2="404.5" stroke="#000" stroke-width="1"/>
<line x1="103.5" y1="363.5" x2="107.5" y2="363.5" stroke="#000" stroke-width="1"/>
<line x1="673.5" y1="363.5" x2="669.5" y2="363.5" stroke="#000" stroke-width="1"/>
<line x1="103.5" y1="322.5" x2="110.5" y2="322.5" stroke="#000" stroke-width="1"/>
<line x1="673.5" y1="322.5" x2="665.0" y2="322.5" stroke="#000" stroke-width="1"/>
<line x1="103.5" y1="281.5" x2="107.5" y2="281.5" stroke="#000" stroke-width="1"/>
<line x1="673.5" y1="281.5" x2="669.5" y2="281.5" stroke="#000" stroke-width="1"/>
<line x1="103.5" y1="239.5" x2="110.5" y2="239.5" stroke="#000" stroke-width="1"/>
<line x1="673.5" y1="239.5" x2="665.0" y2="239.5" stroke="#000" stroke-width="1"/>
<line x1="103.5" y1="198.5" x2="107.5" y2="198.5" stroke="#000" stroke-width="1"/>
<line x1="673.5" y1="198.5" x2="669.5" y2="198.5" stroke="#000" stroke-width="1"/>
<line x1="103.5" y1="157.5" x2="110.5" y2="157.5" stroke="#000" stroke-width="1"/>
<line x1="673.5" y1="157.5" x2="665.0" y2="157.5" stroke="#000" stroke-width="1"/>
<text x="94.5" y="573.8" font-family="Liberation Sans" font-size="12px" fill="#000" textLength="6.0" lengthAdjust="spacingAndGlyphs" >0</text>
<text x="82.2" y="491.8" font-family="Liberation Sans" font-size="12px" fill="#000" textLength="18.3" lengthAdjust="spacingAndGlyphs" >200</text>
<text x="82.2" y="408.8" font-family="Liberation Sans" font-size="12px" fill="#000" textLength="18.3" lengthAdjust="spacingAndGlyphs" >400</text>
<text x="82.2" y="326.8" font-family="Liberation Sans" font-size="12px" fill="#000" textLength="18.3" lengthAdjust="spacingAndGlyphs" >600</text>
<text x="82.2" y="243.8" font-family="Liberation Sans" font-size="12px" fill="#000" textLength="18.3" lengthAdjust="spacingAndGlyphs" >800</text>
<text x="76.5" y="161.8" font-family="Liberation Sans" font-size="12px" fill="#000" textLength="24.0" lengthAdjust="spacingAndGlyphs" >1000</text>
<text x="94.1" y="580.8" font-family="Liberation Sans" font-size="12px" fill="#000" textLength="14.4" lengthAdjust="spacingAndGlyphs" >0.1</text>
<text x="215.10000000000002" y="580.8" font-family="Liberation Sans" font-size="12px" fill="#000" textLength="4.9" lengthAdjust="spacingAndGlyphs" >1</text>
<text x="325.8" y="580.8" font-family="Liberation Sans" font-size="12px" fill="#000" textLength="11.2" lengthAdjust="spacingAndGlyphs" >10</text>
<text x="436.6" y="580.8" font-family="Liberation Sans" font-size="12px" fill="#000" textLength="17.6" lengthAdjust="spacingAndGlyphs" >100</text>
<text x="548.1999999999999" y="580.8" font-family="Liberation Sans" font-size="12px" fill="#000" textLength="23.5" lengthAdjust="spacingAndGlyphs" >1000</text>
<text x="658.3" y="580.8" font-family="Liberation Sans" font-size="12px" fill="#000" textLength="29.1" lengthAdjust="spacingAndGlyphs" >10000</text>
<text x="361" y="595.5" font-family="Liberation Sans" font-size="12px" fill="#000" textLength="37.5" lengthAdjust="spacingAndGlyphs" >Time, s</text>
<text x="0" y="0" font-family="Liberation Sans" font-size="12px" fill="#000" textLength="83" lengthAdjust="spacingAndGlyphs" transform="translate(42.8 409.3) rotate(-90)">Temperature, °C</text>
<line x1="539.4" y1="426.9" x2="496" y2="402" stroke="#cc0000" stroke-width="3.4"/>
<path d="M485 395.8 L500.8 397.1 L493.75 409.2 Z" fill="#cc0000"/>
<circle cx="289" cy="66" r="20" fill="#cc0000"/>
<circle cx="244" cy="372" r="20" fill="#cc0000"/>
<circle cx="945" cy="178" r="20" fill="#cc0000"/>
<path d="M290.2 54.3 V76.1" stroke="#fff" stroke-width="2.8" fill="none"/>
<path d="M283.3 62 L290.6 55" stroke="#fff" stroke-width="2.4" fill="none" stroke-linecap="butt"/>
<path d="M237.3 366.2 C237.8 363, 240.3 361.1, 243.3 361.1 C246.9 361.1, 249.2 363.4, 249.2 366.4 C249.2 368.8, 248 370.5, 245.8 372.7 L237.4 381 H250.7" stroke="#fff" stroke-width="2.6" fill="none" stroke-linejoin="miter"/>
<path d="M938.7 171.4 C939.6 168.6, 941.7 166.9, 944.4 166.9 C947.6 166.9, 949.7 169, 949.7 171.4 C949.7 174, 947.5 175.6, 944.3 175.6 H942.5 M944.3 175.6 C948 175.6, 950.5 177.8, 950.5 181.1 C950.5 184.6, 947.8 187, 944.3 187 C941.4 187, 939.2 185.4, 938.2 183" stroke="#fff" stroke-width="2.5" fill="none"/>
<text x="768.5999999999999" y="184" font-family="Liberation Sans" font-size="12px" fill="#000" textLength="95.7" lengthAdjust="spacingAndGlyphs" >Initial cooling rate</text>
<text x="1003.5" y="184" font-family="Liberation Sans" font-size="12px" fill="#000" textLength="27.5" lengthAdjust="spacingAndGlyphs" >2.212</text>
<text x="1077.8" y="184" font-family="Liberation Sans" font-size="12px" fill="#000" textLength="23.6" lengthAdjust="spacingAndGlyphs" >°C/s</text>
<text x="768.5999999999999" y="205" font-family="Liberation Sans" font-size="12px" fill="#000" textLength="109.9" lengthAdjust="spacingAndGlyphs" >Average cooling rate</text>
<text x="1003.5" y="205" font-family="Liberation Sans" font-size="12px" fill="#000" textLength="27.5" lengthAdjust="spacingAndGlyphs" >2.212</text>
<text x="1077.8" y="205" font-family="Liberation Sans" font-size="12px" fill="#000" textLength="23.6" lengthAdjust="spacingAndGlyphs" >°C/s</text>
<text x="768.5999999999999" y="247" font-family="Liberation Sans" font-size="12px" fill="#000" textLength="51.0" lengthAdjust="spacingAndGlyphs" >Austenite</text>
<text x="1003.5" y="247" font-family="Liberation Sans" font-size="12px" fill="#000" textLength="50.3" lengthAdjust="spacingAndGlyphs" >3.043e-05</text>
<text x="1077.8" y="247" font-family="Liberation Sans" font-size="12px" fill="#000" textLength="10.4" lengthAdjust="spacingAndGlyphs" >%</text>
<text x="768.5999999999999" y="268" font-family="Liberation Sans" font-size="12px" fill="#ff0000" textLength="56.6" lengthAdjust="spacingAndGlyphs" >Martensite</text>
<text x="1003.5" y="268" font-family="Liberation Sans" font-size="12px" fill="#000" textLength="27.5" lengthAdjust="spacingAndGlyphs" >96.35</text>
<text x="1077.8" y="268" font-family="Liberation Sans" font-size="12px" fill="#000" textLength="10.4" lengthAdjust="spacingAndGlyphs" >%</text>
<text x="768.5999999999999" y="289" font-family="Liberation Sans" font-size="12px" fill="#0000ff" textLength="114.1" lengthAdjust="spacingAndGlyphs" >Tempered Martensite</text>
<text x="1003.5" y="289" font-family="Liberation Sans" font-size="12px" fill="#000" textLength="7.2" lengthAdjust="spacingAndGlyphs" >0</text>
<text x="1077.8" y="289" font-family="Liberation Sans" font-size="12px" fill="#000" textLength="10.4" lengthAdjust="spacingAndGlyphs" >%</text>
<text x="768.5999999999999" y="310" font-family="Liberation Sans" font-size="12px" fill="#ff00ff" textLength="80.8" lengthAdjust="spacingAndGlyphs" >Ferrite+Pearlite</text>
<text x="1003.5" y="310" font-family="Liberation Sans" font-size="12px" fill="#000" textLength="27.5" lengthAdjust="spacingAndGlyphs" >3.655</text>
<text x="1077.8" y="310" font-family="Liberation Sans" font-size="12px" fill="#000" textLength="10.4" lengthAdjust="spacingAndGlyphs" >%</text>
<text x="768.5999999999999" y="352" font-family="Liberation Sans" font-size="12px" fill="#000" textLength="100.1" lengthAdjust="spacingAndGlyphs" >Characteristic time</text>
<text x="1003.5" y="352" font-family="Liberation Sans" font-size="12px" fill="#000" textLength="27.5" lengthAdjust="spacingAndGlyphs" >135.6</text>
<text x="1077.8" y="352" font-family="Liberation Sans" font-size="12px" fill="#000" textLength="5.8" lengthAdjust="spacingAndGlyphs" >s</text>
<text x="768.5999999999999" y="373" font-family="Liberation Sans" font-size="12px" fill="#000" textLength="49.6" lengthAdjust="spacingAndGlyphs" >Hardness</text>
<text x="1003.5" y="373" font-family="Liberation Sans" font-size="12px" fill="#000" textLength="27.5" lengthAdjust="spacingAndGlyphs" >417.9</text>
<text x="1077.8" y="373" font-family="Liberation Sans" font-size="12px" fill="#000" textLength="16.3" lengthAdjust="spacingAndGlyphs" >HV</text>
<text x="768.5999999999999" y="394" font-family="Liberation Sans" font-size="12px" fill="#000" textLength="84.6" lengthAdjust="spacingAndGlyphs" >Tensile strength</text>
<text x="1003.5" y="394" font-family="Liberation Sans" font-size="12px" fill="#000" textLength="39.8" lengthAdjust="spacingAndGlyphs" >1937.87</text>
<text x="1077.8" y="394" font-family="Liberation Sans" font-size="12px" fill="#000" textLength="24.4" lengthAdjust="spacingAndGlyphs" >MPa</text>
<text x="768.5999999999999" y="436" font-family="Liberation Sans" font-size="12px" fill="#000" textLength="60.1" lengthAdjust="spacingAndGlyphs" >Latent heat</text>
<text x="1003.5" y="436" font-family="Liberation Sans" font-size="12px" fill="#000" textLength="7.2" lengthAdjust="spacingAndGlyphs" >0</text>
<text x="1077.8" y="436" font-family="Liberation Sans" font-size="12px" fill="#000" textLength="28.7" lengthAdjust="spacingAndGlyphs" >kJ/kg</text>
<text x="768.5999999999999" y="457" font-family="Liberation Sans" font-size="12px" fill="#000" textLength="222.1" lengthAdjust="spacingAndGlyphs" >Volume change due phase transformation</text>
<text x="1003.5" y="457" font-family="Liberation Sans" font-size="12px" fill="#000" textLength="27.5" lengthAdjust="spacingAndGlyphs" >4.176</text>
<text x="1077.8" y="457" font-family="Liberation Sans" font-size="12px" fill="#000" textLength="10.4" lengthAdjust="spacingAndGlyphs" >%</text>
<text x="768.5999999999999" y="499" font-family="Liberation Sans" font-size="12px" fill="#ff0000" textLength="56.6" lengthAdjust="spacingAndGlyphs" >Martensite</text>
<text x="1003.5" y="499" font-family="Liberation Sans" font-size="12px" fill="#000" textLength="66.0" lengthAdjust="spacingAndGlyphs" >255.1 - 52.76</text>
<text x="1077.8" y="499" font-family="Liberation Sans" font-size="12px" fill="#000" textLength="12.8" lengthAdjust="spacingAndGlyphs" >°C</text>
<text x="768.5999999999999" y="520" font-family="Liberation Sans" font-size="12px" fill="#ff00ff" textLength="80.8" lengthAdjust="spacingAndGlyphs" >Ferrite+Pearlite</text>
<text x="1003.5" y="520" font-family="Liberation Sans" font-size="12px" fill="#000" textLength="66.0" lengthAdjust="spacingAndGlyphs" >731.1 - 546.5</text>
<text x="1077.8" y="520" font-family="Liberation Sans" font-size="12px" fill="#000" textLength="12.8" lengthAdjust="spacingAndGlyphs" >°C</text>
</svg>
</body></html>
